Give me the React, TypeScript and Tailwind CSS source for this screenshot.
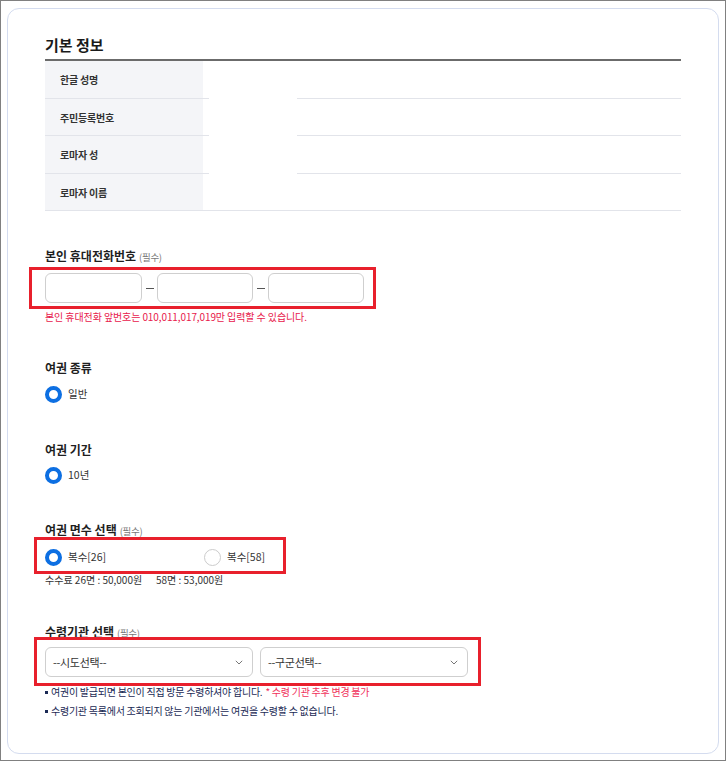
import React from "react";

const font = { fontFamily: '"Noto Sans CJK KR", "Noto Sans", sans-serif' };

function Heading({ children, req }: { children: React.ReactNode; req?: boolean }) {
  return (
    <div className="h-[16px] leading-[16px] text-[12px] font-bold tracking-[0px] text-[#1f1f1f] whitespace-nowrap">
      {children}
      {req && <span className="ml-[3px] text-[9.5px] font-normal tracking-[-0.3px] text-[#777]">(필수)</span>}
    </div>
  );
}

function Radio({ checked, label }: { checked?: boolean; label: string }) {
  return (
    <div className="flex items-center h-[18px]">
      {checked ? (
        <div className="w-[17px] h-[17px] rounded-full border-[4px] border-[#0d6fe2] bg-white" />
      ) : (
        <div className="w-[17px] h-[17px] rounded-full border border-[#cccccc] bg-white" />
      )}
      <span className="ml-[6px] text-[10.5px] tracking-[0px] text-[#333] leading-[18px]">{label}</span>
    </div>
  );
}

function Chevron() {
  return (
    <svg width="8" height="5" viewBox="0 0 8 5" fill="none">
      <path d="M0.8 0.8 L4 4 L7.2 0.8" stroke="#777" strokeWidth="1" />
    </svg>
  );
}

export default function App() {
  const rows = ["한글 성명", "주민등록번호", "로마자 성", "로마자 이름"];
  const heights = ["h-[37px]", "h-[36px]", "h-[37px]", "h-[36px]"];
  return (
    <div style={font} className="w-[726px] h-[761px] border border-[#808080] bg-white pl-[6px] pt-[7px]">
      <div className="w-[712px] h-[746px] border border-[#d4dcef] rounded-[12px] pl-[37px] pt-[26px]">
        <div className="w-[636px]">
          <div className="h-[20px] leading-[20px] text-[15px] font-bold tracking-[0px] text-[#1a1a1a]">기본 정보</div>
          <div className="mt-[4px] h-[2px] bg-[#6b6b6b]" />
          {rows.map((r, i) => (
            <div key={r}>
              <div className={`flex ${heights[i]}`}>
                <div className="w-[158px] bg-[#f4f5f8] flex items-center pl-[15px] text-[10px] font-bold tracking-[-0.2px] text-[#333]">
                  {r}
                </div>
                <div className="flex-1" />
              </div>
              {i < 3 ? (
                <div className="flex h-px">
                  <div className="w-[164px] bg-[#e2e4ea]" />
                  <div className="w-[88px] bg-white" />
                  <div className="flex-1 bg-[#e2e4ea]" />
                </div>
              ) : (
                <div className="h-px bg-[#e2e4ea]" />
              )}
            </div>
          ))}

          {/* phone */}
          <div className="mt-[37px]">
            <Heading req>본인 휴대전화번호</Heading>
          </div>
          <div className="relative mt-[9px] flex items-center">
            <div className="w-[97px] h-[30px] rounded-[6px] border border-[#cfcfcf] bg-white" />
            <div className="w-[15px] flex justify-center">
              <div className="w-[8px] h-px bg-[#555]" />
            </div>
            <div className="w-[96px] h-[30px] rounded-[6px] border border-[#cfcfcf] bg-white" />
            <div className="w-[15px] flex justify-center">
              <div className="w-[8px] h-px bg-[#555]" />
            </div>
            <div className="w-[96px] h-[30px] rounded-[6px] border border-[#cfcfcf] bg-white" />
            <div className="absolute left-[-16px] top-[-6px] w-[347px] h-[42px] border-[3px] border-[#e8202c]" />
          </div>
          <div className="mt-[7px] h-[14px] leading-[14px] text-[10px] tracking-[-0.1px] text-[#e8204c] whitespace-nowrap">
            본인 휴대전화 앞번호는 010,011,017,019만 입력할 수 있습니다.
          </div>

          {/* passport type */}
          <div className="mt-[36px]">
            <Heading>여권 종류</Heading>
          </div>
          <div className="mt-[9px]">
            <Radio checked label="일반" />
          </div>

          <div className="mt-[39px]">
            <Heading>여권 기간</Heading>
          </div>
          <div className="mt-[8px]">
            <Radio checked label="10년" />
          </div>

          <div className="mt-[38px]">
            <Heading req>여권 면수 선택</Heading>
          </div>
          <div className="relative mt-[10px] flex">
            <div className="w-[159px]">
              <Radio checked label="복수[26]" />
            </div>
            <Radio label="복수[58]" />
            <div className="absolute left-[-11px] top-[-11px] w-[252px] h-[37px] border-[3px] border-[#e8202c]" />
          </div>
          <div className="mt-[7px] flex h-[14px] leading-[14px] text-[10px] tracking-[0px] text-[#333] whitespace-nowrap">
            <span className="w-[111px]">수수료 26면 : 50,000원</span>
            <span>58면 : 53,000원</span>
          </div>

          <div className="mt-[37px]">
            <Heading req>수령기관 선택</Heading>
          </div>
          <div className="relative mt-[7px] flex gap-[7px]">
            <div className="w-[208px] h-[30px] rounded-[6px] border border-[#cfcfcf] bg-white flex items-center justify-between pl-[7px] pr-[9px]">
              <span className="text-[11px] tracking-[-0.3px] text-[#333]">--시도선택--</span>
              <Chevron />
            </div>
            <div className="w-[208px] h-[30px] rounded-[6px] border border-[#cfcfcf] bg-white flex items-center justify-between pl-[7px] pr-[9px]">
              <span className="text-[11px] tracking-[-0.3px] text-[#333]">--구군선택--</span>
              <Chevron />
            </div>
            <div className="absolute left-[-11px] top-[-10px] w-[447px] h-[49px] border-[3px] border-[#e8202c]" />
          </div>
          <div className="mt-[8px] flex items-center h-[14px] leading-[14px] text-[10px] tracking-[-0.25px] text-[#1b2a55] whitespace-nowrap">
            <span className="inline-block w-[3px] h-[3px] bg-[#1b2a55] mr-[3px]" />
            여권이 발급되면 본인이 직접 방문 수령하셔야 합니다.
            <span className="ml-[3px] text-[#f0305a]">* 수령 기관 추후 변경 불가</span>
          </div>
          <div className="mt-[5px] flex items-center h-[14px] leading-[14px] text-[10px] tracking-[-0.25px] text-[#1b2a55] whitespace-nowrap">
            <span className="inline-block w-[3px] h-[3px] bg-[#1b2a55] mr-[3px]" />
            수령기관 목록에서 조회되지 않는 기관에서는 여권을 수령할 수 없습니다.
          </div>
        </div>
      </div>
    </div>
  );
}
